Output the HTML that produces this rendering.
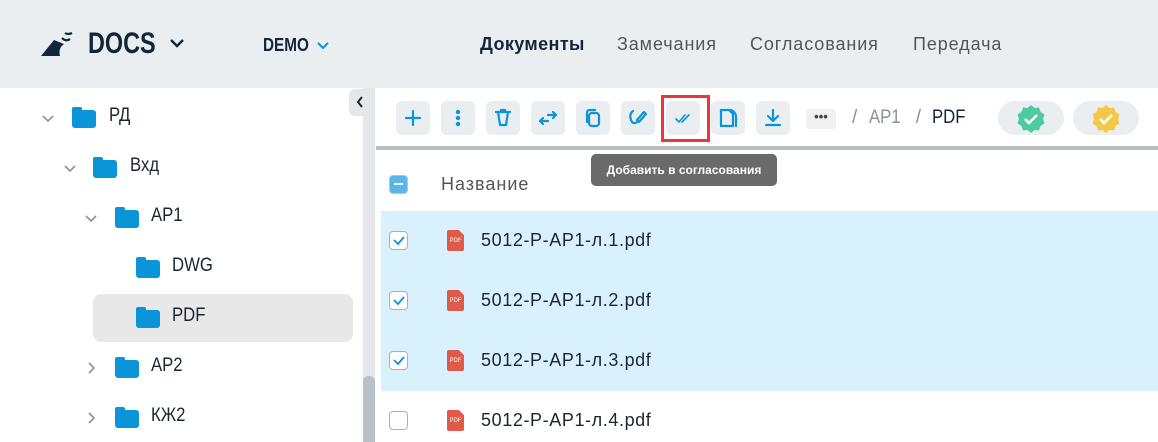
<!DOCTYPE html>
<html><head><meta charset="utf-8">
<style>
*{margin:0;padding:0;box-sizing:border-box}
body{width:1158px;height:442px;overflow:hidden;background:#fff;font-family:"Liberation Sans",sans-serif;color:#1b2633;position:relative}
.abs{position:absolute}
.hdr{left:0;top:0;width:1158px;height:88px;background:#eaeef1}
.nav{font-family:"Liberation Sans",sans-serif;font-size:18px;color:#555;top:34px;letter-spacing:0.9px}
.tree{font-size:19px}
.tree .cond{transform:scaleX(0.88)}
.folder{width:24px;height:18px;background:#0a95d8;border-radius:3px}
.folder:before{content:"";position:absolute;left:0;top:-3px;width:10px;height:5px;background:#0a95d8;border-radius:2px 2px 0 0}
.btn{top:101px;width:34px;height:34px;background:#eaeef1;border-radius:6px;display:flex;align-items:center;justify-content:center}
.btn svg{stroke:#0a95d8;fill:none;stroke-width:2.2;stroke-linecap:round;stroke-linejoin:round}
.cb{left:389px;width:19px;height:19px;border:1.5px solid #a8b0b8;border-radius:4px;background:#fff}
.pdf{left:447px;width:17px;height:21px;background:#e05a4a;border-radius:2px;clip-path:polygon(0 0,70% 0,100% 25%,100% 100%,0 100%);color:#fff;font-size:6px;text-align:center;line-height:23px}
.fn{left:481px;font-size:18px;color:#1b2633;letter-spacing:0.6px}
.cond{display:inline-block;transform-origin:0 50%;transform:scaleX(0.8)}
</style></head><body>
<div class="abs hdr"></div>
<svg class="abs" style="left:40px;top:30px" width="38" height="28" viewBox="0 0 38 28"><path d="M1 26 L14 10 L24 14 Q18 18 20 26 Z" fill="#12253a"/><path d="M22 8 Q26 12 30 9 M25 3 Q28 5 32 3" stroke="#12253a" stroke-width="2.2" fill="none"/></svg>
<div class="abs cond" style="left:88px;top:27px;font-size:30px;font-weight:bold;color:#12253a;transform:scaleX(0.78)">DOCS</div>
<svg class="abs" style="left:169px;top:38px" width="16" height="10"><path d="M2 2 L8 8 L14 2" stroke="#12253a" stroke-width="2.4" fill="none"/></svg>
<div class="abs cond" style="left:263px;top:35px;font-size:18px;font-weight:bold;color:#12253a;transform:scaleX(0.85)">DEMO</div>
<svg class="abs" style="left:316px;top:41px" width="14" height="9"><path d="M2 2 L7 7 L12 2" stroke="#0a95d8" stroke-width="2" fill="none"/></svg>
<div class="abs nav" style="left:480px;color:#12253a;font-weight:bold;letter-spacing:0.4px">Документы</div>
<div class="abs nav" style="left:617px">Замечания</div>
<div class="abs nav" style="left:750px">Согласования</div>
<div class="abs nav" style="left:913px">Передача</div>

<div class="abs" style="left:363px;top:88px;width:12px;height:354px;background:#e5e8eb"></div>
<div class="abs" style="left:363px;top:376px;width:12px;height:66px;background:#b8c0c8;border-radius:5px 5px 0 0"></div>
<div class="abs" style="left:349px;top:89px;width:24px;height:27px;background:#e5e8eb;border-radius:6px"></div>
<svg class="abs" style="left:355px;top:95px" width="10" height="14"><path d="M7 2 L3 7 L7 12" stroke="#222" stroke-width="2" fill="none"/></svg>
<div class="abs" style="left:93px;top:294px;width:260px;height:48px;background:#e8e8e8;border-radius:8px"></div>
<div class="tree">
<svg class="abs" style="left:41px;top:114px" width="14" height="9"><path d="M2 2 L7 7 L12 2" stroke="#8a929a" stroke-width="1.6" fill="none"/></svg>
<div class="abs folder" style="left:72px;top:110px"></div><div class="abs cond" style="left:109px;top:105px">РД</div>
<svg class="abs" style="left:63px;top:164px" width="14" height="9"><path d="M2 2 L7 7 L12 2" stroke="#8a929a" stroke-width="1.6" fill="none"/></svg>
<div class="abs folder" style="left:93px;top:160px"></div><div class="abs cond" style="left:130px;top:155px">Вхд</div>
<svg class="abs" style="left:84px;top:214px" width="14" height="9"><path d="M2 2 L7 7 L12 2" stroke="#8a929a" stroke-width="1.6" fill="none"/></svg>
<div class="abs folder" style="left:115px;top:210px"></div><div class="abs cond" style="left:151px;top:205px">AP1</div>
<div class="abs folder" style="left:136px;top:260px"></div><div class="abs cond" style="left:172px;top:255px">DWG</div>
<div class="abs folder" style="left:136px;top:310px"></div><div class="abs cond" style="left:172px;top:305px">PDF</div>
<svg class="abs" style="left:87px;top:361px" width="9" height="14"><path d="M2 2 L7 7 L2 12" stroke="#8a929a" stroke-width="1.6" fill="none"/></svg>
<div class="abs folder" style="left:115px;top:360px"></div><div class="abs cond" style="left:151px;top:355px">AP2</div>
<svg class="abs" style="left:87px;top:411px" width="9" height="14"><path d="M2 2 L7 7 L2 12" stroke="#8a929a" stroke-width="1.6" fill="none"/></svg>
<div class="abs folder" style="left:115px;top:410px"></div><div class="abs cond" style="left:151px;top:405px">КЖ2</div>
</div>

<div class="abs" style="left:376px;top:146px;width:782px;height:4px;background:#b5bec6"></div>
<div class="abs btn" style="left:396px"><svg width="20" height="20"><path d="M10 3V17M3 10H17"/></svg></div>
<div class="abs btn" style="left:441px"><svg width="20" height="20" style="stroke:none"><circle cx="10" cy="4" r="2.2" fill="#0a95d8"/><circle cx="10" cy="10" r="2.2" fill="#0a95d8"/><circle cx="10" cy="16" r="2.2" fill="#0a95d8"/></svg></div>
<div class="abs btn" style="left:486px"><svg width="20" height="20"><path d="M3 4H17M5 4L7 17H13L15 4M8 4V2H12V4"/></svg></div>
<div class="abs btn" style="left:531px"><svg width="20" height="20"><path d="M10 7H18M15 4L18 7L15 10M10 13H2M5 10L2 13L5 16"/></svg></div>
<div class="abs btn" style="left:576px"><svg width="20" height="20"><rect x="6" y="5" width="10" height="13" rx="3"/><path d="M4 14V5Q4 2 7 2H12"/></svg></div>
<div class="abs btn" style="left:621px"><svg width="22" height="20"><path d="M6 3Q2 6 4 12Q6 17 10 14M12 14L19 6L17 4L10 12Z"/></svg></div>
<div class="abs btn" style="left:666px"><svg width="20" height="20" style="stroke-width:1.6"><path d="M3 11L6 14L12 7M9 14L16 7"/></svg></div>
<div class="abs" style="left:661px;top:95px;width:49px;height:47px;border:3px solid #e8383d"></div>
<div class="abs btn" style="left:711px"><svg width="22" height="22"><path d="M4 3H12L16 7V19H4Z M14 3Q19 5 19 10V19"/></svg></div>
<div class="abs btn" style="left:756px"><svg width="20" height="20"><path d="M10 2V13M5 8L10 13L15 8M3 17H17"/></svg></div>
<div class="abs" style="left:806px;top:109px;width:30px;height:20px;background:#f1f1f1;border-radius:3px;font-size:13px;color:#444;text-align:center;line-height:16px;font-weight:bold">•••</div>
<div class="abs" style="left:852px;top:107px;font-size:19px;color:#8a929a;word-spacing:6px">/ <span class="cond" style="transform:scaleX(0.88)">AP1</span> / <span style="color:#12253a;transform:scaleX(0.88)" class="cond">PDF</span></div>
<div class="abs" style="left:998px;top:101px;width:66px;height:34px;background:#eaeef1;border-radius:17px"></div>
<div class="abs" style="left:1073px;top:101px;width:66px;height:34px;background:#eaeef1;border-radius:17px"></div>
<svg class="abs" style="left:1016px;top:104px" width="30" height="30" viewBox="0 0 30 30"><polygon points="15,1 18.5,4 23,3.5 24.5,8 28.5,10.5 27,15 28.5,19.5 24.5,22 23,26.5 18.5,26 15,29 11.5,26 7,26.5 5.5,22 1.5,19.5 3,15 1.5,10.5 5.5,8 7,3.5 11.5,4" fill="#4ccba0"/><path d="M9 15L13 19L21 11" stroke="#fff" stroke-width="2.6" fill="none"/></svg>
<svg class="abs" style="left:1091px;top:104px" width="30" height="30" viewBox="0 0 30 30"><polygon points="15,1 18.5,4 23,3.5 24.5,8 28.5,10.5 27,15 28.5,19.5 24.5,22 23,26.5 18.5,26 15,29 11.5,26 7,26.5 5.5,22 1.5,19.5 3,15 1.5,10.5 5.5,8 7,3.5 11.5,4" fill="#f3c84a"/><path d="M9 15L13 19L21 11" stroke="#fff" stroke-width="2.6" fill="none"/></svg>

<div class="abs" style="left:591px;top:154px;width:186px;height:32px;background:#6a6a6a;border-radius:5px;color:#fff;font-weight:bold;font-size:12px;line-height:32px;text-align:center">Добавить в согласования</div>

<div class="abs" style="left:389px;top:175px;width:19px;height:19px;background:#5ab5e8;border:1.5px solid #a8c8dd;border-radius:4px"></div>
<div class="abs" style="left:394px;top:183px;width:9px;height:2px;background:#fff"></div>
<div class="abs" style="left:441px;top:174px;font-size:18px;color:#555;letter-spacing:1px">Название</div>
<div class="abs" style="left:381px;top:211px;width:777px;height:180px;background:#d9f1fd"></div>
<div class="abs cb" style="top:231px"></div><svg class="abs" style="left:392px;top:235px" width="14" height="11"><path d="M2 5L6 9L12 2" stroke="#0a95d8" stroke-width="1.8" fill="none"/></svg>
<div class="abs cb" style="top:291px"></div><svg class="abs" style="left:392px;top:295px" width="14" height="11"><path d="M2 5L6 9L12 2" stroke="#0a95d8" stroke-width="1.8" fill="none"/></svg>
<div class="abs cb" style="top:351px"></div><svg class="abs" style="left:392px;top:355px" width="14" height="11"><path d="M2 5L6 9L12 2" stroke="#0a95d8" stroke-width="1.8" fill="none"/></svg>
<div class="abs cb" style="top:411px"></div>
<div class="abs pdf" style="top:230px">PDF</div><div class="abs fn" style="top:230px">5012-P-AP1-л.1.pdf</div>
<div class="abs pdf" style="top:290px">PDF</div><div class="abs fn" style="top:290px">5012-P-AP1-л.2.pdf</div>
<div class="abs pdf" style="top:350px">PDF</div><div class="abs fn" style="top:350px">5012-P-AP1-л.3.pdf</div>
<div class="abs pdf" style="top:410px">PDF</div><div class="abs fn" style="top:410px">5012-P-AP1-л.4.pdf</div>
</body></html>
